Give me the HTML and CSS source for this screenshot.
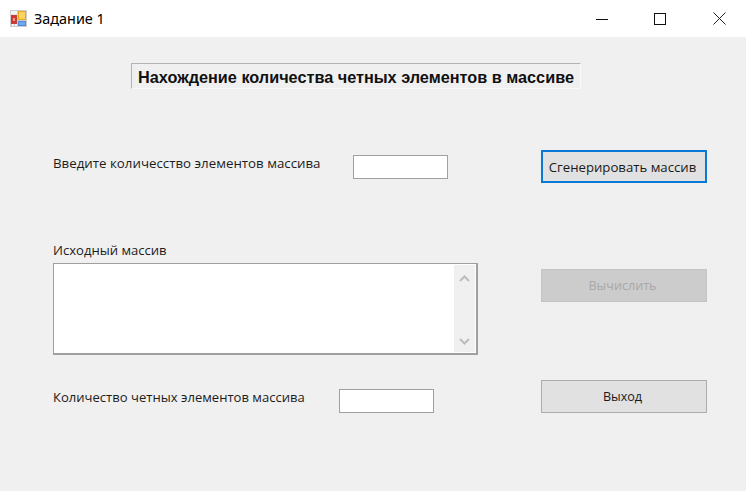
FILE: index.html
```html
<!DOCTYPE html>
<html lang="ru">
<head>
<meta charset="utf-8">
<title>Задание 1</title>
<link rel="stylesheet" href="styles.css">
</head>
<body>
<div class="window">
  <header class="titlebar">
    <svg class="app-icon" width="17" height="17" viewBox="0 0 17 17">
      <rect width="17" height="17" fill="#cdcdcd"/>
      <rect x="1" y="1" width="6" height="3" fill="#f4f4f4"/>
      <rect x="1" y="4" width="6" height="1" fill="#e4e4e4"/>
      <rect x="1" y="5" width="6" height="9" fill="#b8433c"/>
      <rect x="2" y="6" width="4" height="7" fill="#d8342c"/>
      <rect x="3" y="8" width="2" height="3" fill="#ee9c90"/>
      <rect x="2" y="14" width="2" height="2" fill="#f4f4f4"/>
      <rect x="5" y="14" width="2" height="2" fill="#f4f4f4"/>
      <rect x="8" y="1" width="8" height="9" fill="#e8a820"/>
      <rect x="9" y="2" width="6" height="7" fill="#fbd35e"/>
      <rect x="8" y="11" width="8" height="5" fill="#4f8ae0"/>
      <rect x="9" y="12" width="6" height="3" fill="#74a8ee"/>
    </svg>
    <span class="win-title">Задание 1</span>
    <div class="controls">
      <svg class="ctl" width="12" height="12" viewBox="0 0 12 12"><path d="M0 6.500h12" stroke="#111" fill="none"/></svg>
      <svg class="ctl" width="12" height="12" viewBox="0 0 12 12"><rect x="0.500" y="0.500" width="11" height="11" stroke="#111" fill="none"/></svg>
      <svg class="ctl" width="13" height="13" viewBox="0 0 13 13"><path d="M0.500 0.500l12 12M12.500 0.500l-12 12" stroke="#222" fill="none"/></svg>
    </div>
  </header>
  <main class="form">
    <h1 class="heading">Нахождение количества четных элементов в массиве</h1>
    <div class="panels">
      <section class="left">
        <div class="field-row first">
          <label class="label wide">Введите количесство элементов массива</label>
          <div class="input"></div>
        </div>
        <label class="label source-label">Исходный массив</label>
        <div class="memo">
          <div class="scrollbar">
            <svg width="11" height="7" viewBox="0 0 11 7"><path d="M1 6l4.500-4.500L10 6" stroke="#bdbdbd" stroke-width="2" fill="none"/></svg>
            <svg width="11" height="7" viewBox="0 0 11 7"><path d="M1 1l4.500 4.500L10 1" stroke="#bdbdbd" stroke-width="2" fill="none"/></svg>
          </div>
        </div>
        <div class="field-row last">
          <label class="label">Количество четных элементов массива</label>
          <div class="input"></div>
        </div>
      </section>
      <section class="right">
        <button class="btn focused">Сгенерировать массив</button>
        <button class="btn disabled">Вычислить</button>
        <button class="btn exit">Выход</button>
      </section>
    </div>
  </main>
</div>
</body>
</html>
```

FILE: styles.css
```css
* { box-sizing: border-box; }
html, body { margin: 0; padding: 0; }
body { width: 746px; height: 491px; overflow: hidden; background: #f0f0f0; font-family: "Open Sans", "Noto Sans", sans-serif; color: #1a1a1a; }
.window { display: flex; flex-direction: column; height: 491px; }
.titlebar { height: 37px; flex: none; background: #fff; display: flex; align-items: center; padding-left: 10px; }
.app-icon { margin-right: 7px; flex: none; }
.win-title { font: 14.4px "Noto Sans", sans-serif; color: #000; }
.controls { margin-left: auto; display: flex; align-items: center; }
.ctl { display: block; }
.ctl:nth-child(1) { margin-right: 46px; }
.ctl:nth-child(2) { margin-right: 47px; }
.ctl:nth-child(3) { margin-right: 20px; }
.form { flex: 1; padding: 26px 40px 0 53px; }
.heading { width: 450px; height: 26px; margin: 0 0 61px 78px; padding-top: 2px; border-top: 1px solid #b4b4b4; border-left: 1px solid #b4b4b4; border-right: 1px solid #fafafa; border-bottom: 1px solid #fafafa; display: flex; align-items: center; justify-content: center; font: bold 16.25px "Liberation Sans", sans-serif; color: #111; white-space: nowrap; }
.panels { display: flex; }
.left { width: 425px; flex: none; }
.label { display: block; font-size: 13.07px; line-height: 17px; color: #1c1c1c; white-space: nowrap; }
.wide { font-size: 13.3px; }
.field-row { display: flex; align-items: flex-start; }
.first { height: 24px; margin-top: 5px; }
.first .input { margin-left: 32px; }
.last { height: 24px; margin-top: 34px; }
.last .input { margin-left: 34px; }
.input { width: 95px; height: 24px; background: #fff; border: 1px solid #a0a0a0; flex: none; }
.source-label { margin-top: 63px; height: 17px; }
.memo { height: 92px; margin-top: 4px; background: #fff; border: 2px solid #a0a0a0; border-width: 1px 2px 2px 1px; padding: 1px; display: flex; justify-content: flex-end; }
.scrollbar { width: 21px; background: #f0f0f0; display: flex; flex-direction: column; justify-content: space-between; align-items: center; padding: 10px 0 7px; }
.scrollbar svg { display: block; }
.right { margin-left: 63px; width: 166px; flex: none; display: flex; flex-direction: column; }
.btn { width: 166px; height: 33px; padding: 0 3px 0 0; font: 12.6px "Open Sans", "Noto Sans", sans-serif; background: #e1e1e1; border: 1px solid #adadad; color: #1a1a1a; }
.focused { border: 2px solid #0a78d7; font-size: 13.2px; }
.disabled { margin-top: 86px; background: #cccccc; border-color: #c4c4c4; color: #a8a8a8; }
.exit { margin-top: 78px; }
```
